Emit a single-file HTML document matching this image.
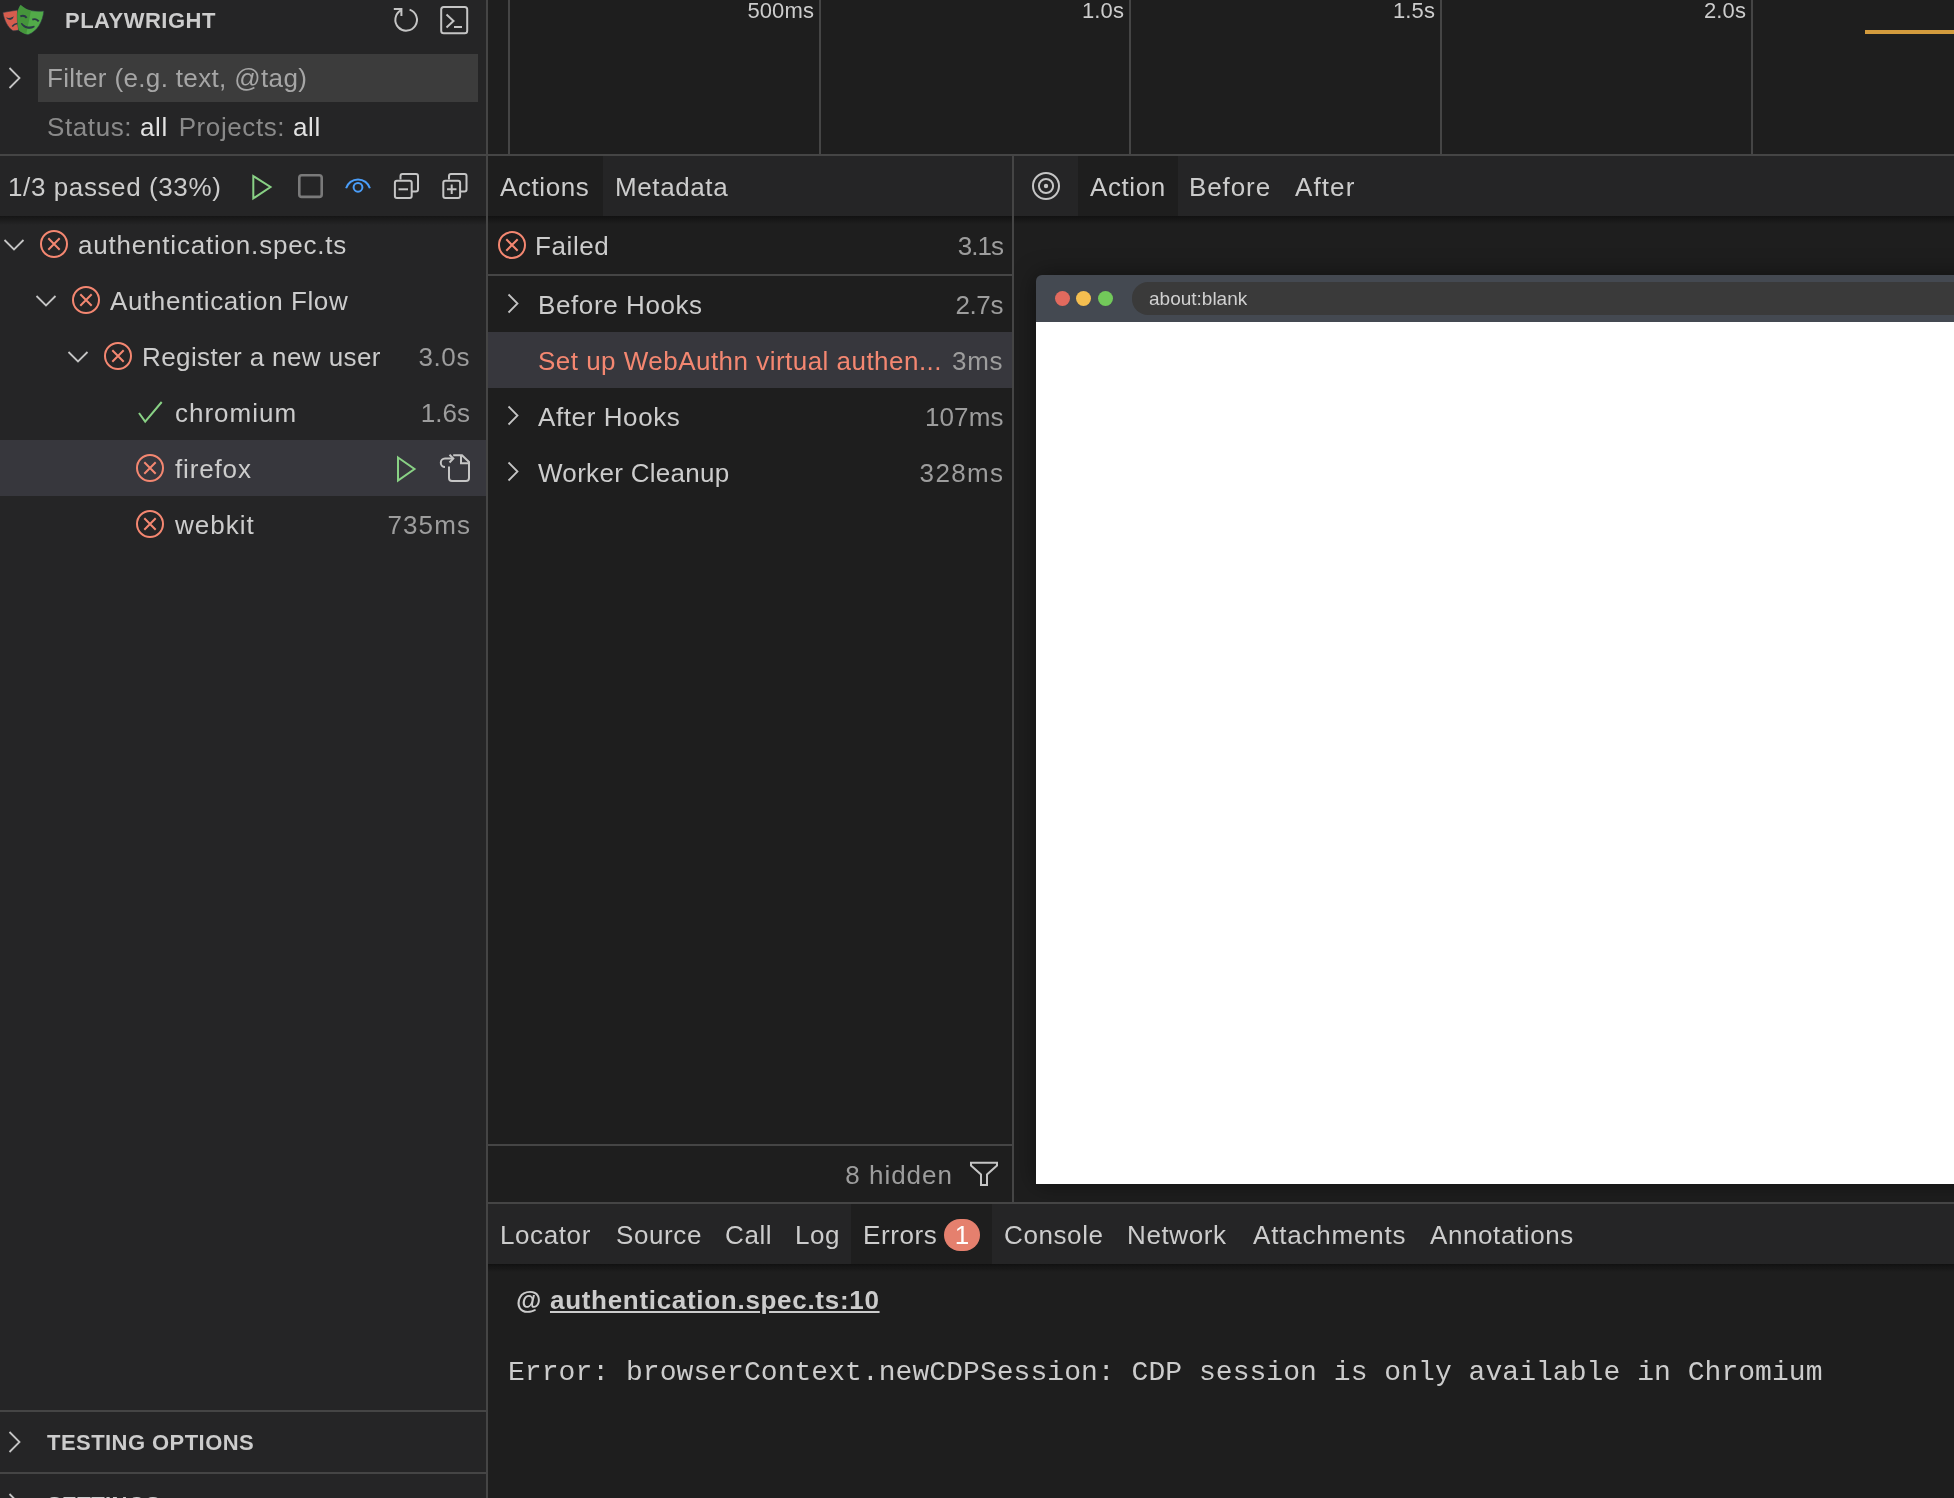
<!DOCTYPE html>
<html><head><meta charset="utf-8">
<style>
html,body{margin:0;padding:0;}
body{width:1954px;height:1498px;overflow:hidden;background:#1e1e1e;position:relative;font-family:"Liberation Sans",sans-serif;color:#cccccc;}
.a{position:absolute;}
.t{position:absolute;white-space:nowrap;font-size:26px;line-height:30px;letter-spacing:0.6px;}
.d{color:#9d9d9d;}
.r{text-align:right;}
.bd{background:#454545;position:absolute;}
svg{position:absolute;overflow:visible;}
</style></head><body>
<div id="wrap" style="position:absolute;left:0;top:0;width:1954px;height:1498px;will-change:transform;">

<!-- ============ SIDEBAR ============ -->
<div class="a" id="sidebar" style="left:0;top:0;width:486px;height:1498px;background:#252526;">
  <!-- logo -->
  <svg style="left:0;top:0" width="50" height="40" viewBox="0 0 50 40">
    <path d="M2.9 12.5 C7.5 11.6 12.5 10.8 17.6 10.1 L18.6 30.1 C16.8 30.7 14.8 30.9 13 30.8 C7.8 27.5 4.2 20.5 2.9 12.5 Z" fill="#d65d4e" stroke="#2b3a46" stroke-width="0.6"/>
    <path d="M20.6 5 C23.5 7.6 26.8 9.8 31 10.6 C35.5 11.3 40 11.3 43.8 11 C43 21 37.5 31.5 28 34.8 C24.2 33.8 21 32 18.8 30.2 C17.4 24.5 17.1 18 17.4 13 C18 10 19.1 7 20.6 5 Z" fill="#52ab49" stroke="#2b3a46" stroke-width="0.6"/>
    <path d="M20.6 5 C23.5 7.6 26.8 9.8 31 10.6 C29.5 18 28 26 26.2 34.3 C23.5 33.2 20.8 31.8 18.8 30.2 C17.4 24.5 17.1 18 17.4 13 C18 10 19.1 7 20.6 5 Z" fill="#45953b"/>
    <path d="M7.7 18.4 C9.5 19.8 12 19.4 12.8 17.4 C11 18.3 9.4 18.6 7.7 18.4Z" fill="#2b3a46" stroke="#2b3a46" stroke-width="1.1"/>
    <path d="M12.2 26.4 C13.6 24.6 15.2 23.6 17.3 23.5" fill="none" stroke="#2b3a46" stroke-width="1.6"/>
    <path d="M20.3 16.4 C22.5 15.3 25.3 16 26.7 17.8" fill="none" stroke="#2b3a46" stroke-width="1.9"/>
    <path d="M32.3 19.6 C34.5 18.6 37.3 19.6 38.7 21.4" fill="none" stroke="#2b3a46" stroke-width="1.9"/>
    <path d="M21.4 23.4 C24.5 26.8 29 28.2 34.4 26.4 C30 29.6 24.5 28.4 21.4 23.4Z" fill="#2b3a46" stroke="#2b3a46" stroke-width="1.3"/>
  </svg>
  <div class="t" style="left:65px;top:8px;font-size:22px;line-height:25px;font-weight:bold;letter-spacing:0.5px;color:#cccccc;">PLAYWRIGHT</div>
  <!-- reload -->
  <svg style="left:390px;top:4px" width="32" height="32" viewBox="0 0 32 32">
    <path d="M10.9 6.4 A10.8 10.8 0 1 0 19.6 5.6" fill="none" stroke="#c5c5c5" stroke-width="2"/>
    <path d="M3.8 5 H11.4 V12" fill="none" stroke="#c5c5c5" stroke-width="2"/>
  </svg>
  <!-- terminal -->
  <svg style="left:438px;top:4px" width="32" height="32" viewBox="0 0 32 32">
    <rect x="3.2" y="3" width="26" height="26.2" rx="2.5" fill="none" stroke="#c5c5c5" stroke-width="2"/>
    <path d="M8.5 10.6 L15.5 16.9 L8.5 23.4" fill="none" stroke="#c5c5c5" stroke-width="2"/>
    <path d="M16 23 H24" fill="none" stroke="#c5c5c5" stroke-width="2"/>
  </svg>

  <!-- filter row -->
  <svg style="left:4px;top:62px" width="24" height="32" viewBox="0 0 24 32">
    <path d="M5.5 6 L15.5 16 L5.5 26" fill="none" stroke="#c5c5c5" stroke-width="1.8"/>
  </svg>
  <div class="a" style="left:38px;top:54px;width:440px;height:48px;background:#3c3c3c;"></div>
  <div class="t" style="left:47px;top:63px;color:#a6a6a6;letter-spacing:0.35px;">Filter (e.g. text, @tag)</div>
  <div class="t" style="left:47px;top:112px;"><span style="color:#8a8a8a">Status:</span> <span style="color:#e2e2e2">all</span>&nbsp;<span style="margin-left:3px;color:#8a8a8a">Projects:</span> <span style="color:#e2e2e2">all</span></div>

  <div class="bd" style="left:0;top:154px;width:486px;height:2px;"></div>

  <!-- toolbar -->
  <div class="t" style="left:8px;top:172px;">1/3 passed (33%)</div>
  <svg style="left:246px;top:171px" width="32" height="32" viewBox="0 0 32 32">
    <path d="M7.3 5 L24.5 16 L7.3 27.4 Z" fill="none" stroke="#89d185" stroke-width="2"/>
  </svg>
  <svg style="left:294px;top:170px" width="32" height="32" viewBox="0 0 32 32">
    <rect x="5.3" y="5.2" width="22.4" height="21.7" rx="2.5" fill="none" stroke="#7a7a7a" stroke-width="2.6"/>
  </svg>
  <svg style="left:342px;top:170px" width="32" height="32" viewBox="0 0 32 32">
    <path d="M4.1 18.3 A12.4 12.4 0 0 1 27.9 18.3" fill="none" stroke="#4a9df8" stroke-width="2"/>
    <circle cx="16" cy="17.3" r="4.4" fill="none" stroke="#4a9df8" stroke-width="2"/>
  </svg>
  <!-- collapse all -->
  <svg style="left:390px;top:170px" width="32" height="32" viewBox="0 0 32 32">
    <path d="M10.5 9.5 V6 a2 2 0 0 1 2 -2 H26 a2 2 0 0 1 2 2 V19.5 a2 2 0 0 1 -2 2 H22" fill="none" stroke="#c5c5c5" stroke-width="2"/>
    <rect x="4.9" y="10.7" width="16.8" height="17.2" rx="2" fill="none" stroke="#c5c5c5" stroke-width="2"/>
    <path d="M8.5 19.3 H18" stroke="#c5c5c5" stroke-width="2"/>
  </svg>
  <!-- expand all -->
  <svg style="left:438px;top:170px" width="32" height="32" viewBox="0 0 32 32">
    <path d="M11 9.5 V6 a2 2 0 0 1 2 -2 H26.5 a2 2 0 0 1 2 2 V19.5 a2 2 0 0 1 -2 2 H22.5" fill="none" stroke="#c5c5c5" stroke-width="2"/>
    <rect x="5.3" y="10.7" width="16.8" height="17.2" rx="2" fill="none" stroke="#c5c5c5" stroke-width="2"/>
    <path d="M9 19.3 H18.5 M13.7 14.5 V24" stroke="#c5c5c5" stroke-width="2"/>
  </svg>

  <!-- tree shadow -->
  <div class="a" style="left:0;top:216px;width:486px;height:9px;background:linear-gradient(#151515,rgba(37,37,38,0));"></div>

  <!-- tree rows -->
  <div class="a" style="left:0;top:440px;width:486px;height:56px;background:#37373d;"></div>

  <svg style="left:0;top:228px" width="32" height="32" viewBox="0 0 32 32"><path d="M4.5 12 L14 21.5 L23.5 12" fill="none" stroke="#c5c5c5" stroke-width="1.8"/></svg>
  <svg style="left:38px;top:228px" width="32" height="32" viewBox="0 0 32 32"><circle cx="16" cy="16" r="13" fill="none" stroke="#f48771" stroke-width="2"/><path d="M10.3 10.3 L21.7 21.7 M21.7 10.3 L10.3 21.7" stroke="#f48771" stroke-width="2"/></svg>
  <div class="t" style="left:78px;top:230px;letter-spacing:0.8px;">authentication.spec.ts</div>

  <svg style="left:32px;top:284px" width="32" height="32" viewBox="0 0 32 32"><path d="M4.5 12 L14 21.5 L23.5 12" fill="none" stroke="#c5c5c5" stroke-width="1.8"/></svg>
  <svg style="left:70px;top:284px" width="32" height="32" viewBox="0 0 32 32"><circle cx="16" cy="16" r="13" fill="none" stroke="#f48771" stroke-width="2"/><path d="M10.3 10.3 L21.7 21.7 M21.7 10.3 L10.3 21.7" stroke="#f48771" stroke-width="2"/></svg>
  <div class="t" style="left:110px;top:286px;">Authentication Flow</div>

  <svg style="left:64px;top:340px" width="32" height="32" viewBox="0 0 32 32"><path d="M4.5 12 L14 21.5 L23.5 12" fill="none" stroke="#c5c5c5" stroke-width="1.8"/></svg>
  <svg style="left:102px;top:340px" width="32" height="32" viewBox="0 0 32 32"><circle cx="16" cy="16" r="13" fill="none" stroke="#f48771" stroke-width="2"/><path d="M10.3 10.3 L21.7 21.7 M21.7 10.3 L10.3 21.7" stroke="#f48771" stroke-width="2"/></svg>
  <div class="t" style="left:142px;top:342px;letter-spacing:0.4px;">Register a new user</div>
  <div class="t d r" style="right:16px;top:342px;">3.0s</div>

  <svg style="left:134px;top:396px" width="32" height="32" viewBox="0 0 32 32"><path d="M5 17 L11.2 25.7 L27.7 6" fill="none" stroke="#89d185" stroke-width="2"/></svg>
  <div class="t" style="left:175px;top:398px;letter-spacing:1px;">chromium</div>
  <div class="t d r" style="right:16px;top:398px;letter-spacing:0px;">1.6s</div>

  <svg style="left:134px;top:452px" width="32" height="32" viewBox="0 0 32 32"><circle cx="16" cy="16" r="13" fill="none" stroke="#f48771" stroke-width="2"/><path d="M10.3 10.3 L21.7 21.7 M21.7 10.3 L10.3 21.7" stroke="#f48771" stroke-width="2"/></svg>
  <div class="t" style="left:175px;top:454px;letter-spacing:0.85px;">firefox</div>
  <svg style="left:390px;top:453px" width="32" height="32" viewBox="0 0 32 32"><path d="M8 4.5 L24.5 16 L8 27.5 Z" fill="none" stroke="#89d185" stroke-width="2"/></svg>
  <svg style="left:438px;top:452px" width="32" height="32" viewBox="0 0 32 32">
    <path d="M15.2 3.3 H24 L31 10 V26 a3 3 0 0 1 -3 3 H14 a3 3 0 0 1 -3 -3 V14.5" fill="none" stroke="#c5c5c5" stroke-width="2"/>
    <path d="M23 3.3 V11.3 H31" fill="none" stroke="#c5c5c5" stroke-width="2"/>
    <path d="M7 15 a4.2 4.2 0 0 1 0 -8.4 H15" fill="none" stroke="#c5c5c5" stroke-width="2"/>
    <path d="M11.5 2.8 L15.3 6.6 L11.5 10.5" fill="none" stroke="#c5c5c5" stroke-width="2"/>
  </svg>

  <svg style="left:134px;top:508px" width="32" height="32" viewBox="0 0 32 32"><circle cx="16" cy="16" r="13" fill="none" stroke="#f48771" stroke-width="2"/><path d="M10.3 10.3 L21.7 21.7 M21.7 10.3 L10.3 21.7" stroke="#f48771" stroke-width="2"/></svg>
  <div class="t" style="left:175px;top:510px;letter-spacing:1px;">webkit</div>
  <div class="t d r" style="right:15px;top:510px;letter-spacing:1.1px;">735ms</div>

  <!-- bottom sections -->
  <div class="bd" style="left:0;top:1410px;width:486px;height:2px;"></div>
  <svg style="left:4px;top:1426px" width="24" height="32" viewBox="0 0 24 32"><path d="M5.5 6 L15.5 16 L5.5 26" fill="none" stroke="#c5c5c5" stroke-width="1.8"/></svg>
  <div class="t" style="left:47px;top:1430px;font-size:22px;line-height:25px;font-weight:bold;letter-spacing:0.45px;">TESTING OPTIONS</div>
  <div class="bd" style="left:0;top:1472px;width:486px;height:2px;"></div>
  <svg style="left:4px;top:1488px" width="24" height="32" viewBox="0 0 24 32"><path d="M5.5 6 L15.5 16 L5.5 26" fill="none" stroke="#c5c5c5" stroke-width="1.8"/></svg>
  <div class="t" style="left:47px;top:1492px;font-size:22px;line-height:25px;font-weight:bold;letter-spacing:0.45px;">SETTINGS</div>
</div>
<div class="bd" style="left:486px;top:0;width:2px;height:1498px;"></div>

<!-- ============ TIMELINE ============ -->
<div class="a" style="left:488px;top:0;width:1466px;height:154px;background:#1e1e1e;overflow:hidden;">
  <div class="bd" style="left:20px;top:0;width:2px;height:155px;"></div>
  <div class="bd" style="left:331px;top:0;width:2px;height:155px;"></div>
  <div class="bd" style="left:641px;top:0;width:2px;height:155px;"></div>
  <div class="bd" style="left:952px;top:0;width:2px;height:155px;"></div>
  <div class="bd" style="left:1263px;top:0;width:2px;height:155px;"></div>
  <div class="t r" style="right:1140px;top:-1px;font-size:22px;line-height:24px;letter-spacing:0.1px;">500ms</div>
  <div class="t r" style="right:830px;top:-1px;font-size:22px;line-height:24px;letter-spacing:0.1px;">1.0s</div>
  <div class="t r" style="right:519px;top:-1px;font-size:22px;line-height:24px;letter-spacing:0.1px;">1.5s</div>
  <div class="t r" style="right:208px;top:-1px;font-size:22px;line-height:24px;letter-spacing:0.1px;">2.0s</div>
  <div class="a" style="left:1377px;top:30px;width:100px;height:4px;background:#d39b3d;"></div>
</div>
<div class="bd" style="left:488px;top:154px;width:1466px;height:2px;"></div>

<!-- ============ ACTIONS PANEL ============ -->
<div class="a" style="left:488px;top:157px;width:524px;height:1046px;background:#1e1e1e;">
  <div class="a" style="left:0;top:-1px;width:524px;height:60px;background:#252526;"></div>
  <div class="a" style="left:0;top:-1px;width:115px;height:60px;background:#1e1e1e;"></div>
  <div class="t" style="left:12px;top:15px;">Actions</div>
  <div class="t" style="left:127px;top:15px;">Metadata</div>
  <div class="a" style="left:0;top:59px;width:524px;height:8px;background:linear-gradient(#121212,rgba(30,30,30,0));"></div>

  <svg style="left:8px;top:72px" width="32" height="32" viewBox="0 0 32 32"><circle cx="16" cy="16" r="13" fill="none" stroke="#f48771" stroke-width="2"/><path d="M10.3 10.3 L21.7 21.7 M21.7 10.3 L10.3 21.7" stroke="#f48771" stroke-width="2"/></svg>
  <div class="t" style="left:47px;top:74px;">Failed</div>
  <div class="t d r" style="right:9px;top:74px;letter-spacing:-1px;">3.1s</div>
  <div class="bd" style="left:0;top:117px;width:524px;height:2px;"></div>

  <svg style="left:14px;top:131px" width="24" height="32" viewBox="0 0 24 32"><path d="M6.5 6.5 L15.5 15.5 L6.5 24.5" fill="none" stroke="#c5c5c5" stroke-width="1.8"/></svg>
  <div class="t" style="left:50px;top:133px;">Before Hooks</div>
  <div class="t d r" style="right:9px;top:133px;letter-spacing:-0.4px;">2.7s</div>

  <div class="a" style="left:0;top:175px;width:524px;height:56px;background:#37373d;"></div>
  <div class="t" style="left:50px;top:189px;color:#f48771;letter-spacing:0.475px;">Set up WebAuthn virtual authen...</div>
  <div class="t d r" style="right:9px;top:189px;">3ms</div>

  <svg style="left:14px;top:243px" width="24" height="32" viewBox="0 0 24 32"><path d="M6.5 6.5 L15.5 15.5 L6.5 24.5" fill="none" stroke="#c5c5c5" stroke-width="1.8"/></svg>
  <div class="t" style="left:50px;top:245px;">After Hooks</div>
  <div class="t d r" style="right:8.5px;top:245px;letter-spacing:0.1px;">107ms</div>

  <svg style="left:14px;top:299px" width="24" height="32" viewBox="0 0 24 32"><path d="M6.5 6.5 L15.5 15.5 L6.5 24.5" fill="none" stroke="#c5c5c5" stroke-width="1.8"/></svg>
  <div class="t" style="left:50px;top:301px;letter-spacing:0.3px;">Worker Cleanup</div>
  <div class="t d r" style="right:7.6px;top:301px;letter-spacing:1.35px;">328ms</div>

  <div class="bd" style="left:0;top:987px;width:524px;height:2px;"></div>
  <div class="t d r" style="right:59px;top:1003px;letter-spacing:1px;">8 hidden</div>
  <svg style="left:480px;top:1001px" width="32" height="32" viewBox="0 0 32 32"><path d="M3 4.85 H29 V7.5 L19 16.5 V27 H13 V16.5 L3 7.5 Z" fill="none" stroke="#c5c5c5" stroke-width="2"/></svg>
</div>
<div class="bd" style="left:1012px;top:156px;width:2px;height:1047px;"></div>

<!-- ============ SNAPSHOT PANEL ============ -->
<div class="a" style="left:1014px;top:156px;width:940px;height:1047px;background:#1e1e1e;overflow:hidden;">
<div class="a" style="left:0;top:1px;width:940px;height:1046px;">
  <div class="a" style="left:0;top:-1px;width:940px;height:60px;background:#252526;"></div>
  <div class="a" style="left:64px;top:-1px;width:100px;height:60px;background:#1e1e1e;"></div>
  <svg style="left:16px;top:13px" width="32" height="32" viewBox="0 0 32 32">
    <circle cx="16" cy="16" r="13" fill="none" stroke="#c5c5c5" stroke-width="2"/>
    <circle cx="16" cy="16" r="7.1" fill="none" stroke="#c5c5c5" stroke-width="2"/>
    <circle cx="16" cy="16" r="2.2" fill="#c5c5c5"/>
  </svg>
  <div class="t" style="left:76px;top:15px;">Action</div>
  <div class="t" style="left:175px;top:15px;letter-spacing:0.9px;">Before</div>
  <div class="t" style="left:281px;top:15px;letter-spacing:1.1px;">After</div>
  <div class="a" style="left:0;top:59px;width:940px;height:8px;background:linear-gradient(#121212,rgba(30,30,30,0));"></div>

  <!-- browser frame -->
  <div class="a" style="left:22px;top:118px;width:960px;height:909px;box-shadow:0 0 24px rgba(0,0,0,0.45);border-radius:6px 0 0 0;overflow:hidden;">
    <div class="a" style="left:0;top:0;width:960px;height:47px;background:#444951;"></div>
    <div class="a" style="left:19px;top:16px;width:15px;height:15px;border-radius:50%;background:#e26a5e;"></div>
    <div class="a" style="left:40px;top:16px;width:15px;height:15px;border-radius:50%;background:#f4be50;"></div>
    <div class="a" style="left:62px;top:16px;width:15px;height:15px;border-radius:50%;background:#72c95a;"></div>
    <div class="a" style="left:96px;top:7px;width:900px;height:33px;border-radius:16px;background:#3a3a3a;"></div>
    <div class="t" style="left:113px;top:9px;font-size:19px;line-height:30px;letter-spacing:0;color:#d0d0d0;">about:blank</div>
    <div class="a" style="left:0;top:47px;width:960px;height:862px;background:#ffffff;"></div>
  </div>
</div>
</div>

<!-- ============ BOTTOM PANEL ============ -->
<div class="bd" style="left:488px;top:1202px;width:1466px;height:2px;"></div>
<div class="a" style="left:488px;top:1204px;width:1466px;height:60px;background:#252526;">
  <div class="a" style="left:363px;top:0;width:141px;height:60px;background:#1e1e1e;"></div>
  <div class="t" style="left:12px;top:16px;">Locator</div>
  <div class="t" style="left:128px;top:16px;">Source</div>
  <div class="t" style="left:237px;top:16px;">Call</div>
  <div class="t" style="left:307px;top:16px;">Log</div>
  <div class="t" style="left:375px;top:16px;">Errors</div>
  <div class="a" style="left:456px;top:15px;width:36px;height:32px;border-radius:16px;background:#e5806e;"></div>
  <div class="t" style="left:456px;top:16px;width:36px;text-align:center;color:#ffffff;letter-spacing:0;">1</div>
  <div class="t" style="left:516px;top:16px;">Console</div>
  <div class="t" style="left:639px;top:16px;">Network</div>
  <div class="t" style="left:765px;top:16px;letter-spacing:0.8px;">Attachments</div>
  <div class="t" style="left:942px;top:16px;">Annotations</div>
</div>
<div class="a" style="left:488px;top:1264px;width:1466px;height:8px;background:linear-gradient(#121212,rgba(30,30,30,0));"></div>
<div class="t" style="left:516px;top:1285px;font-weight:bold;letter-spacing:0.7px;">@ <span style="text-decoration:underline;">authentication.spec.ts:10</span></div>
<div class="t" style="left:508px;top:1356px;font-family:'Liberation Mono',monospace;font-size:28px;line-height:34px;letter-spacing:0.05px;">Error: browserContext.newCDPSession: CDP session is only available in Chromium</div>

</div>
</body></html>
